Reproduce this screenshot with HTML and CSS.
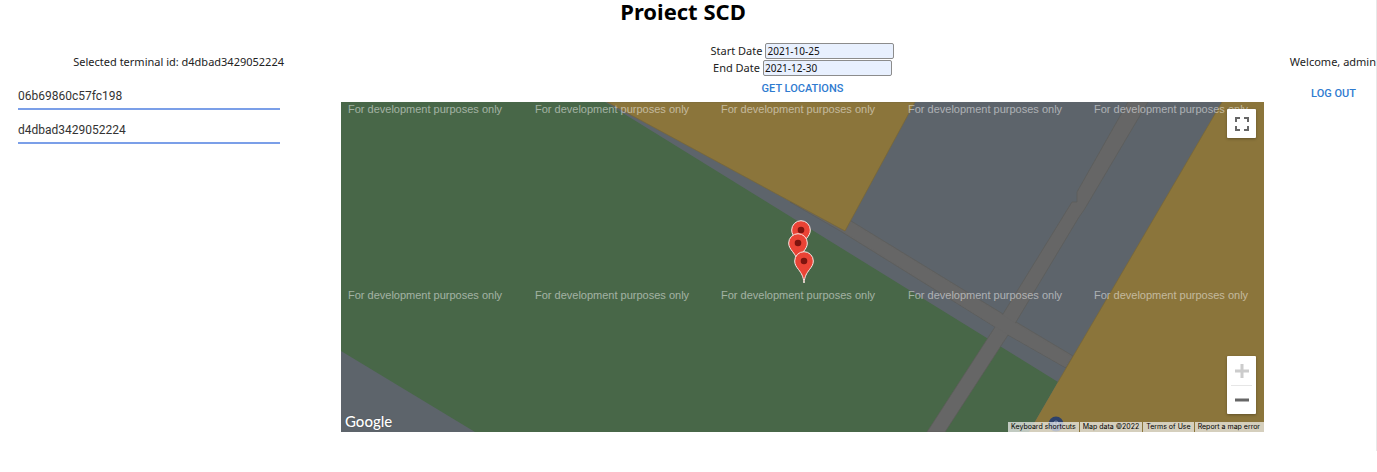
FILE: index.html
```html
<!DOCTYPE html>
<html lang="en">
<head>
<meta charset="utf-8">
<title>Proiect SCD</title>
<link rel="stylesheet" href="styles.css">
</head>
<body>
<div class="page">
  <header class="header"><h1 class="title">Proiect SCD</h1></header>
  <div class="layout">
    <aside class="terminals">
      <p class="selected">Selected terminal id: d4dbad3429052224</p>
      <ul class="terminal-list">
        <li><button class="terminal" type="button">06b69860c57fc198</button></li>
        <li><button class="terminal" type="button">d4dbad3429052224</button></li>
      </ul>
    </aside>
    <main class="main">
      <form class="filters">
        <div class="field"><label for="start">Start Date</label><input id="start" class="date" type="text" value="2021-10-25"></div>
        <div class="field"><label for="end">End Date</label><input id="end" class="date" type="text" value="2021-12-30"></div>
        <button class="text-button" type="button">GET LOCATIONS</button>
      </form>
      <section class="map" aria-label="Map">
        <svg class="canvas" viewBox="0 0 923 330" preserveAspectRatio="xMidYMid slice">
          <defs>
            <g id="pin">
              <path d="M0 22C-.8 15-2.5 12.500-5.500 8.500C-7.800 5.500-9.300 3.500-9.300 0A9.300 9.300 0 0 1 9.300 0C9.300 3.500 7.800 5.500 5.500 8.500C2.500 12.500.8 15 0 22Z" fill="#ea4335" stroke="#fbe9e7" stroke-width="1"/>
              <circle r="3.300" fill="#7d140f"/>
            </g>
          </defs>
          <rect width="923" height="330" fill="#5d646b"/>
          <path d="M0 0H264L717 280L688 330H134L0 249Z" fill="#486748"/>
          <path d="M449 100L510 119L662 212L675 220L732 254L725 266L667 233L654 225L501 130Z" fill="#666" stroke="#5b5b59" stroke-width=".7"/>
          <path d="M787 0H807L743 108L738 115L675 220L667 233L604 330H586L654 225L662 212L731 100H736V90Z" fill="#666" stroke="#5b5b59" stroke-width=".7"/>
          <path d="M511 121L662 213L674 221L731 255L724 265L666 232L653 224L502 129Z" fill="#666"/>
          <path d="M266 0L504 129L574 0Z" fill="#8b753b" stroke="#77673a" stroke-width=".8"/>
          <path d="M881 0L717 280L688 330H923V0Z" fill="#8b753b"/>
          <path d="M881 0L717 280" stroke="#77673a" stroke-width=".8"/>
          <circle cx="715" cy="322" r="7.500" fill="#2d416b"/>
          <circle cx="715" cy="321" r="2" fill="none" stroke="#8291ad"/>
          <g class="watermark">
            <text x="7" y="11">For development purposes only</text>
            <text x="194" y="11">For development purposes only</text>
            <text x="380" y="11">For development purposes only</text>
            <text x="567" y="11">For development purposes only</text>
            <text x="753" y="11">For development purposes only</text>
            <text x="7" y="197">For development purposes only</text>
            <text x="194" y="197">For development purposes only</text>
            <text x="380" y="197">For development purposes only</text>
            <text x="567" y="197">For development purposes only</text>
            <text x="753" y="197">For development purposes only</text>
          </g>
          <use href="#pin" x="460" y="128"/>
          <use href="#pin" x="457" y="141"/>
          <use href="#pin" x="463" y="159"/>
        </svg>
        <button class="control fullscreen" type="button" aria-label="Toggle fullscreen view">
          <svg width="14" height="14" viewBox="0 0 14 14"><path d="M1 5V1H5M9 1H13V5M13 9V13H9M5 13H1V9" fill="none" stroke="#666" stroke-width="2"/></svg>
        </button>
        <div class="control zoom">
          <button class="zoom-button" type="button" aria-label="Zoom in"><svg width="14" height="14" viewBox="0 0 14 14"><path d="M7 0V14M0 7H14" stroke="#ccc" stroke-width="3"/></svg></button>
          <button class="zoom-button" type="button" aria-label="Zoom out"><svg width="14" height="14" viewBox="0 0 14 14"><path d="M0 7H14" stroke="#666" stroke-width="3"/></svg></button>
        </div>
        <a class="logo" href="#">Google</a>
        <div class="credits">
          <button class="credit" type="button">Keyboard shortcuts</button>
          <span class="credit">Map data ©2022</span>
          <a class="credit" href="#">Terms of Use</a>
          <a class="credit" href="#">Report a map error</a>
        </div>
      </section>
    </main>
    <aside class="account">
      <p class="welcome">Welcome, admin</p>
      <button class="text-button" type="button">LOG OUT</button>
    </aside>
  </div>
</div>
</body>
</html>
```
FILE: styles.css
```css
* { box-sizing: border-box; }
body {
  margin: 0;
  background: #fff;
  color: #222;
  font: 11px/16px "Noto Sans", "Open Sans", sans-serif;
}
button { border: 0; padding: 0; background: none; color: inherit; font: inherit; cursor: pointer; }
p { margin: 0; }
.page { padding-bottom: 19px; border-right: 1px solid #e8e8e8; }
.header { padding-right: 10px; text-align: center; }
.title { margin: 0; color: #000; font-size: 22px; line-height: 22px; font-weight: 700; }
.layout { display: grid; grid-template-columns: 341fr 923fr 112fr; padding-top: 21px; }

.terminals { padding: 11px 61px 0 18px; }
.selected { margin-right: -4px; text-align: right; white-space: nowrap; }
.terminal-list { display: grid; gap: 8px; margin: 14px 0 0; padding: 0; list-style: none; }
.terminal {
  display: block;
  width: 100%;
  height: 26px;
  border-bottom: 2px solid #7b9fe8;
  text-align: left;
  color: #333;
  font: 12px/24px Roboto, sans-serif;
}

.filters { display: flex; flex-direction: column; align-items: center; gap: 1px; padding-bottom: 1px; }
.field { display: flex; align-items: center; gap: 3px; }
.date {
  width: 129px;
  height: 16px;
  padding: 0 1px;
  border: 1px solid #8c8c8c;
  border-radius: 2px;
  background: #e8f0fe;
  color: #111;
  font: 10px/14px "Noto Sans", "Open Sans", sans-serif;
}
.text-button { color: #2f7bd0; font: 500 11px/24px Roboto, sans-serif; white-space: nowrap; }

.map { position: relative; aspect-ratio: 923 / 330; overflow: hidden; }
.canvas { display: block; width: 100%; height: 100%; }
.watermark { fill: #fff; fill-opacity: .5; font: 11px "Liberation Sans", Arial, sans-serif; }
.control { position: absolute; right: 8px; width: 29px; border-radius: 1px; background: #fff; box-shadow: 0 1px 3px rgba(0, 0, 0, .3); }
.fullscreen { top: 7px; display: grid; place-items: center; height: 29px; }
.zoom { bottom: 18px; display: grid; }
.zoom-button { display: grid; place-items: center; height: 29px; }
.zoom-button + .zoom-button { margin: 0 4px; border-top: 1px solid #e6e6e6; }
.logo {
  position: absolute;
  left: 4px;
  bottom: 2px;
  color: #fff;
  font: 500 15px/18px Lato, sans-serif;
  text-decoration: none;
  text-shadow: 0 0 1px #444;
}
.credits { position: absolute; right: 0; bottom: 0; display: flex; gap: 1px; }
.credit {
  padding: 0 3px;
  background: rgba(245, 245, 245, .7);
  color: #000;
  font: 7px/10px Inter, Roboto, sans-serif;
  text-decoration: none;
  white-space: nowrap;
}
.credit:last-child { padding-right: 4px; }

.account { display: flex; flex-direction: column; align-items: flex-end; gap: 12px; padding-top: 11px; }
.welcome { white-space: nowrap; }
.account .text-button { margin-right: 20px; }
```
